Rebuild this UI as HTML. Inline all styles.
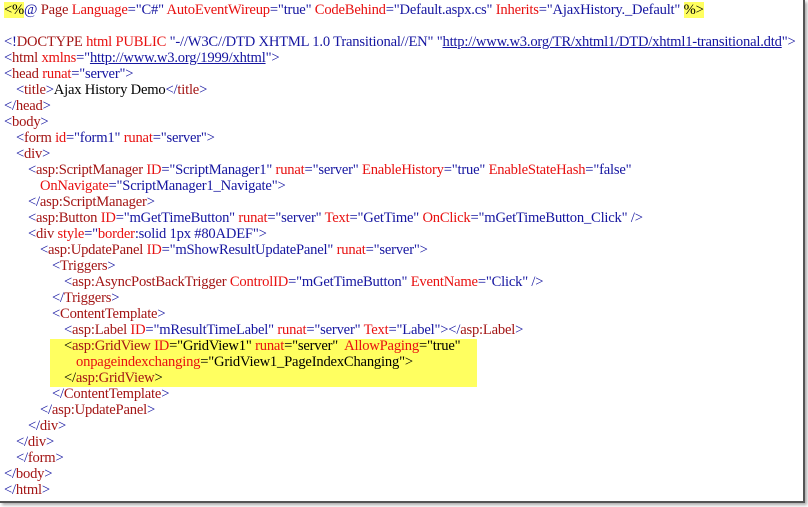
<!DOCTYPE html>
<html><head><style>
body{margin:0;width:808px;height:507px;background:#fff;overflow:hidden;position:relative;font-family:"Liberation Serif",serif;font-size:14.6px;}
.frame{position:absolute;left:0;top:0;width:803px;height:501px;border-right:2px solid #555;border-bottom:2px solid #555;box-shadow:2px 2px 3px #aaa;}
.code{position:absolute;left:4px;top:2px;line-height:16px;letter-spacing:-0.2px;color:#1515a0}
.l{height:16px;white-space:pre}
.i1{padding-left:12px}.i2{padding-left:24px}.i3{padding-left:36px}.i4{padding-left:48px}.i5{padding-left:60px}
.t{color:#a31515}.a{color:#e81010}.k{color:#000}
.u{text-decoration:underline}
.hl{position:absolute;left:50px;top:339px;width:427px;height:48px;background:#ffff60}
.h1{background:#ffff60}
</style></head><body>
<div class="frame"></div>
<div class="hl"></div>
<div class="code">
<div class="l"><span class="h1 k">&lt;%</span>@ <span class="t">Page</span> <span class="a">Language</span>="C#" <span class="a">AutoEventWireup</span>="true" <span class="a">CodeBehind</span>="Default.aspx.cs" <span class="a">Inherits</span>="AjaxHistory._Default" <span class="h1 k">%&gt;</span></div>
<div class="l"> </div>
<div class="l">&lt;!<span class="t">DOCTYPE</span> <span class="a">html</span> <span class="a">PUBLIC</span> "-//W3C//DTD XHTML 1.0 Transitional//EN" "<span class="u">http://www.w3.org/TR/xhtml1/DTD/xhtml1-transitional.dtd</span>"&gt;</div>
<div class="l">&lt;<span class="t">html</span> <span class="a">xmlns</span>="<span class="u">http://www.w3.org/1999/xhtml</span>"&gt;</div>
<div class="l">&lt;<span class="t">head</span> <span class="a">runat</span>="server"&gt;</div>
<div class="l i1">&lt;<span class="t">title</span>&gt;<span class="k">Ajax History Demo</span>&lt;/<span class="t">title</span>&gt;</div>
<div class="l">&lt;/<span class="t">head</span>&gt;</div>
<div class="l">&lt;<span class="t">body</span>&gt;</div>
<div class="l i1">&lt;<span class="t">form</span> <span class="a">id</span>="form1" <span class="a">runat</span>="server"&gt;</div>
<div class="l i1">&lt;<span class="t">div</span>&gt;</div>
<div class="l i2">&lt;<span class="t">asp:ScriptManager</span> <span class="a">ID</span>="ScriptManager1" <span class="a">runat</span>="server" <span class="a">EnableHistory</span>="true" <span class="a">EnableStateHash</span>="false"</div>
<div class="l i3"><span class="a">OnNavigate</span>="ScriptManager1_Navigate"&gt;</div>
<div class="l i2">&lt;/<span class="t">asp:ScriptManager</span>&gt;</div>
<div class="l i2">&lt;<span class="t">asp:Button</span> <span class="a">ID</span>="mGetTimeButton" <span class="a">runat</span>="server" <span class="a">Text</span>="GetTime" <span class="a">OnClick</span>="mGetTimeButton_Click" /&gt;</div>
<div class="l i2">&lt;<span class="t">div</span> <span class="a">style</span>="<span class="a">border</span>:solid 1px #80ADEF"&gt;</div>
<div class="l i3">&lt;<span class="t">asp:UpdatePanel</span> <span class="a">ID</span>="mShowResultUpdatePanel" <span class="a">runat</span>="server"&gt;</div>
<div class="l i4">&lt;<span class="t">Triggers</span>&gt;</div>
<div class="l i5">&lt;<span class="t">asp:AsyncPostBackTrigger</span> <span class="a">ControlID</span>="mGetTimeButton" <span class="a">EventName</span>="Click" /&gt;</div>
<div class="l i4">&lt;/<span class="t">Triggers</span>&gt;</div>
<div class="l i4">&lt;<span class="t">ContentTemplate</span>&gt;</div>
<div class="l i5">&lt;<span class="t">asp:Label</span> <span class="a">ID</span>="mResultTimeLabel" <span class="a">runat</span>="server" <span class="a">Text</span>="Label"&gt;&lt;/<span class="t">asp:Label</span>&gt;</div>
<div class="l i5 k">&lt;<span class="t">asp:GridView</span> <span class="a">ID</span>="GridView1" <span class="a">runat</span>="server"  <span class="a">AllowPaging</span>="true"</div>
<div class="l k" style="padding-left:72px"><span class="a">onpageindexchanging</span>="GridView1_PageIndexChanging"&gt;</div>
<div class="l i5 k">&lt;/<span class="t">asp:GridView</span>&gt;</div>
<div class="l i4">&lt;/<span class="t">ContentTemplate</span>&gt;</div>
<div class="l i3">&lt;/<span class="t">asp:UpdatePanel</span>&gt;</div>
<div class="l i2">&lt;/<span class="t">div</span>&gt;</div>
<div class="l i1">&lt;/<span class="t">div</span>&gt;</div>
<div class="l i1">&lt;/<span class="t">form</span>&gt;</div>
<div class="l">&lt;/<span class="t">body</span>&gt;</div>
<div class="l">&lt;/<span class="t">html</span>&gt;</div>
</div>
</body></html>
